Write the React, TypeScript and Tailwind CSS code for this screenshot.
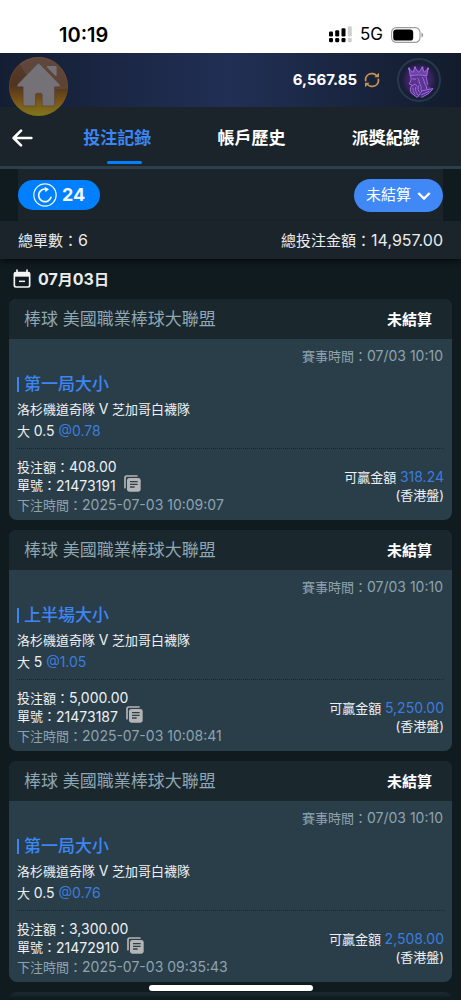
import React, { useState } from 'react';

interface Bet {
  id: string;
  market: string;
  pick: string;
  line: string;
  odds: string;
  stake: string;
  win: string;
  placedAt: string;
}

const TABS = ['投注記錄', '帳戶歷史', '派獎紀錄'];

const BETS: Bet[] = [
  { id: '21473191', market: '第一局大小', pick: '大', line: '0.5', odds: '0.78', stake: '408.00', win: '318.24', placedAt: '2025-07-03 10:09:07' },
  { id: '21473187', market: '上半場大小', pick: '大', line: '5', odds: '1.05', stake: '5,000.00', win: '5,250.00', placedAt: '2025-07-03 10:08:41' },
  { id: '21472910', market: '第一局大小', pick: '大', line: '0.5', odds: '0.76', stake: '3,300.00', win: '2,508.00', placedAt: '2025-07-03 09:35:43' },
];

function SignalIcon() {
  return (
    <svg className="w-[23px] h-[17px]" viewBox="0 0 23 17" fill="#000">
      <rect x="0" y="5.5" width="4" height="5" rx="1.2" />
      <rect x="6.2" y="4.2" width="4" height="6.3" rx="1.2" />
      <rect x="12.5" y="2.2" width="4" height="8.3" rx="1.2" />
      <rect x="18.8" y="0.2" width="4" height="10.3" rx="1.2" fill="#cfcfcf" />
      <rect x="0" y="12" width="4" height="4.2" rx="1.3" />
      <rect x="6.2" y="12" width="4" height="4.2" rx="1.3" />
      <rect x="12.5" y="12" width="4" height="4.2" rx="1.3" />
      <rect x="18.8" y="12" width="4" height="4.2" rx="1.3" fill="#cfcfcf" />
    </svg>
  );
}

function BatteryIcon() {
  return (
    <svg className="w-[33px] h-4" viewBox="0 0 33 16">
      <rect x="0.6" y="0.6" width="28.4" height="14.8" rx="4.8" fill="none" stroke="#9c9c9c" strokeWidth="1.1" />
      <rect x="2.2" y="2.4" width="20" height="11.2" rx="3.2" fill="#000" />
      <path d="M30.4 5.6c1.2.4 1.8 1.3 1.8 2.4s-.6 2-1.8 2.4z" fill="#9c9c9c" />
    </svg>
  );
}

function HomeIcon() {
  return (
    <svg className="w-[59px] h-[59px]" viewBox="0 0 176 176">
      <defs>
        <linearGradient id="homeBg" x1="0" y1="0" x2="0" y2="1">
          <stop offset="0" stopColor="#573d35" />
          <stop offset="0.48" stopColor="#50341f" />
          <stop offset="0.75" stopColor="#7a5318" />
          <stop offset="1" stopColor="#80791a" />
        </linearGradient>
        <clipPath id="homeClip">
          <circle cx="88" cy="88" r="88" />
        </clipPath>
      </defs>
      <circle cx="88" cy="88" r="88" fill="url(#homeBg)" />
      <path d="M30 12C44 66 106 104 180 94V-10H30z" fill="#6a5147" opacity="0.5" clipPath="url(#homeClip)" />
      <circle cx="88" cy="88" r="86.5" fill="none" stroke="#8a5a22" strokeWidth="2" opacity="0.5" />
      <path
        d="M84 21q4-4 8 0l59 60q5 6-2 8h-13v53q0 4-4 4H99v-33q0-5-5-5H84q-5 0-5 5v33H46q-4 0-4-4V89H29q-8-2-3-8z"
        fill="#757277"
        stroke="#4a3a34"
        strokeWidth="1.5"
      />
      <path d="M115 27h25q2 0 2 2v26q-1 4-4 1l-24-25q-2-3 1-4z" fill="#757277" />
    </svg>
  );
}

function KingIcon() {
  return (
    <svg className="w-11 h-11" viewBox="0 0 132 132">
      <defs>
        <radialGradient id="kingGlow">
          <stop offset="0" stopColor="#4a2a75" />
          <stop offset="0.7" stopColor="#38245f" />
          <stop offset="1" stopColor="#1c1c38" />
        </radialGradient>
      </defs>
      <circle cx="66" cy="66" r="63" fill="#142036" stroke="#2a384c" strokeWidth="6" />
      <circle cx="66" cy="66" r="52" fill="url(#kingGlow)" />
      <path d="M42 54h47l3 30 16 8-13 14-22 12H58L42 106l-4-12 4-12-5-4 5-12z" fill="#6b41a8" opacity="0.55" />
      <path d="M40 54l-4-22 12 11 6-14 11 14 11-14 6 14 11-11-4 22c-16-4-33-4-49 0z" fill="#8350c4" opacity="0.7" />
      <g fill="none" stroke="#a46be8" strokeWidth="3" strokeLinejoin="round" strokeLinecap="round">
        <path d="M40 54l-4-22 12 11 6-14 11 14 11-14 6 14 11-11-4 22c-16-4-33-4-49 0z" />
        <path d="M42 58v8l-5 12 5 2M47 63h9M44 83l11-4 5 5M43 84c-5 8-4 16 1 22l14 10" />
        <path d="M62 60c6 6 3 14 8 20s0 12 3 18M76 58c7 8 4 16 9 22s2 8 4 12M87 57c4 8 2 14 5 22" />
        <path d="M48 90c-1 8 2 14 6 18M56 88c-2 10 2 16 6 22M64 84c-2 10 0 14 3 18" />
        <path d="M60 118l16-20 32-6-12 14-22 12M74 110l22-10" />
      </g>
      <g fill="#a56bea">
        <circle cx="36" cy="32" r="3.4" />
        <circle cx="54" cy="29" r="3.4" />
        <circle cx="76" cy="29" r="3.4" />
        <circle cx="93" cy="32" r="3.4" />
      </g>
    </svg>
  );
}

function RefreshIcon() {
  return (
    <svg className="w-4 h-4" viewBox="0 0 48 48" fill="none" stroke="#c8924f" strokeWidth="5">
      <path d="M5 28C2 12 14 3 27 5c5 1 8 3 12 7M43 20c3 16-9 25-22 23-5-1-8-3-12-7" />
      <path d="M45 2v14H31zM3 46V32h14z" fill="#c8924f" stroke="none" />
    </svg>
  );
}

function CountdownIcon() {
  return (
    <svg className="w-6 h-6" viewBox="0 0 72 72" fill="none" stroke="#f3f7fb" strokeWidth="3.6">
      <circle cx="36" cy="36" r="33.5" />
      <path d="M40 18.5A19 19 0 1 0 54 43" strokeWidth="5" strokeLinecap="round" />
      <path d="M35 11l13 8-11 9z" fill="#f3f7fb" stroke="none" />
    </svg>
  );
}

function CalendarIcon() {
  return (
    <svg className="w-[18px] h-5" viewBox="0 0 54 60">
      <path d="M12 3v8M42 3v8" stroke="#f5f5f5" strokeWidth="5" strokeLinecap="round" />
      <rect x="4" y="11" width="46" height="43" rx="5" fill="none" stroke="#f5f5f5" strokeWidth="5" />
      <path d="M4 10h46v13H4z" fill="#f5f5f5" />
      <path d="M18 37h18" stroke="#f5f5f5" strokeWidth="4.5" />
    </svg>
  );
}

function CopyIcon() {
  return (
    <svg className="w-[17px] h-[17px]" viewBox="0 0 51 51">
      <path d="M3 38V8q0-5 5-5h31" fill="none" stroke="#b5b5b5" strokeWidth="5" strokeLinecap="round" />
      <rect x="9" y="9" width="41" height="41" rx="7" fill="#b5b5b5" />
      <path d="M18 20h23M18 28h23M18 36h14" stroke="#2b3f4b" strokeWidth="4" />
    </svg>
  );
}

function BetCard({ bet }: { bet: Bet }) {
  return (
    <article className="rounded-lg overflow-hidden bg-[#2a3e4a]">
      <header className="h-10 pt-[2px] pl-[15px] pr-5 flex items-center justify-between bg-[#1a272d]">
        <h3 className="text-[17px] text-[#8fa6b3]">棒球 美國職業棒球大聯盟</h3>
        <span className="text-[15px] font-bold text-white">未結算</span>
      </header>
      <div className="px-2 pt-[7px] pb-[6px] text-[13px] text-[#eef1f3]">
        <p className="h-5 leading-5 pr-px text-right text-[#8ea3af]">
          賽事時間：<span className="text-sm/5">07/03 10:10</span>
        </p>
        <h4 className="mt-1 flex items-center gap-[5px] text-[17px] leading-7 font-medium text-[#3d86f5]">
          <span className="w-[2px] h-[15px] bg-[#3d86f5]" />
          {bet.market}
        </h4>
        <p className="h-[22px] leading-[22px]">
          洛杉磯道奇隊 <span className="text-sm/[22px]">V</span> 芝加哥白襪隊
        </p>
        <p className="h-[22px] leading-[22px]">
          {bet.pick}{' '}
          <span className="text-sm/[22px]">
            {bet.line} <span className="text-[#3b7ddd]">@{bet.odds}</span>
          </span>
        </p>
        <div className="mt-[6px] pt-2 border-t border-dotted border-[#172730] flex items-center justify-between leading-[19px]">
          <div>
            <p className="h-[19px]">
              投注額：<span className="text-sm/[19px]">{bet.stake}</span>
            </p>
            <p className="h-[19px] flex items-center">
              單號：<span className="text-sm/[19px]">{bet.id}</span>
              <button aria-label="複製單號" className="ml-2 -mt-1">
                <CopyIcon />
              </button>
            </p>
            <p className="h-[19px] text-[#8ea3af]">
              下注時間：<span className="text-sm/[19px]">{bet.placedAt}</span>
            </p>
          </div>
          <div className="text-right">
            <p className="h-[19px]">
              可贏金額 <span className="text-sm/[19px] text-[#3b7ddd]">{bet.win}</span>
            </p>
            <p className="h-[19px]">(香港盤)</p>
          </div>
        </div>
      </div>
    </article>
  );
}

export default function App() {
  const [tab, setTab] = useState(TABS[0]);

  return (
    <div
      lang="zh-Hant"
      className="h-screen flex flex-col overflow-hidden bg-[#0f1b1f] text-white font-['Inter','Noto_Sans_CJK_TC',sans-serif]"
    >
      <div className="h-[53px] shrink-0 pt-4 pl-[59px] pr-[37px] flex items-center justify-between bg-white text-black">
        <span className="text-xl font-semibold">10:19</span>
        <div className="flex items-center gap-2">
          <SignalIcon />
          <span className="text-[17px]">5G</span>
          <BatteryIcon />
        </div>
      </div>

      <header className="relative h-[54px] shrink-0 pr-5 flex items-center justify-end gap-[7px] bg-linear-to-r from-[#141e33] via-[#212f55] to-[#121c2c]">
        <a href="#home" aria-label="首頁" className="absolute left-[9px] top-1">
          <HomeIcon />
        </a>
        <span className="text-[15px] font-bold">6,567.85</span>
        <button aria-label="更新餘額">
          <RefreshIcon />
        </button>
        <button aria-label="會員中心" className="ml-[10px]">
          <KingIcon />
        </button>
      </header>

      <nav className="h-[62px] shrink-0 pr-2 flex bg-[#1a242a] border-b-3 border-[#2b3f4c]">
        <button aria-label="返回" className="w-[50px] pl-3 pt-[2px]">
          <svg className="w-[21px] h-[18px]" viewBox="0 0 63 54" fill="none" stroke="#fff" strokeWidth="8" strokeLinecap="round" strokeLinejoin="round">
            <path d="M58 27H6M27 5L5 27l22 22" />
          </svg>
        </button>
        <div className="flex-1 grid grid-cols-3">
          {TABS.map((name) => (
            <button
              key={name}
              onClick={() => setTab(name)}
              className={`relative pt-1 text-[17px] font-bold ${name === tab ? 'text-[#3d86f5]' : 'text-white'}`}
            >
              {name}
              {name === tab && (
                <span className="absolute left-1/2 bottom-[2px] -ml-[10px] w-[35px] h-[3px] rounded-full bg-[#0080ff]" />
              )}
            </button>
          ))}
        </div>
      </nav>

      <div className="h-[52px] shrink-0 px-[18px]">
        <div className="h-full flex items-center justify-between bg-[#1a242a]">
          <button className="w-[82px] h-[30px] rounded-full bg-[#0080ff] flex items-center justify-center gap-[5px] text-lg font-bold text-[#f3f7fb]">
            <CountdownIcon />
            24
          </button>
          <div className="relative">
            <select
              aria-label="注單狀態"
              className="appearance-none w-[89px] h-[33px] pl-3 rounded-full bg-[#3f88f6] text-[15px] text-white"
            >
              <option>未結算</option>
              <option>已結算</option>
            </select>
            <svg className="absolute right-3 top-3 w-[14px] h-[10px] pointer-events-none" viewBox="0 0 42 30" fill="none" stroke="#fff" strokeWidth="7">
              <path d="M4 6l17 17L38 6" />
            </svg>
          </div>
        </div>
      </div>

      <div className="relative h-[38px] shrink-0 px-[18px] flex items-center justify-between bg-[#1a242a] text-[15px] text-[#e8ebed] shadow-md shadow-black/40">
        <span>
          總單數：<span className="text-base">6</span>
        </span>
        <span>
          總投注金額：<span className="text-base">14,957.00</span>
        </span>
      </div>

      <main className="flex-1 min-h-0 overflow-y-auto [scrollbar-width:none] px-[9px]">
        <h2 className="h-10 pl-1 flex items-center gap-[7px] text-[15px] font-bold text-[#ececec]">
          <CalendarIcon />
          <span>
            <span className="text-base">07</span>月<span className="text-base">03</span>日
          </span>
        </h2>
        <div className="flex flex-col gap-[10px]">
          {BETS.map((bet) => (
            <BetCard key={bet.id} bet={bet} />
          ))}
          <div className="h-10 rounded-t-lg bg-linear-to-b from-[#1a272d] from-5% to-[#0f1b1f] to-15%" />
        </div>
      </main>

      <div className="fixed left-1/2 bottom-[9px] -translate-x-1/2 w-[164px] h-[6px] rounded-full bg-white" />
    </div>
  );
}
